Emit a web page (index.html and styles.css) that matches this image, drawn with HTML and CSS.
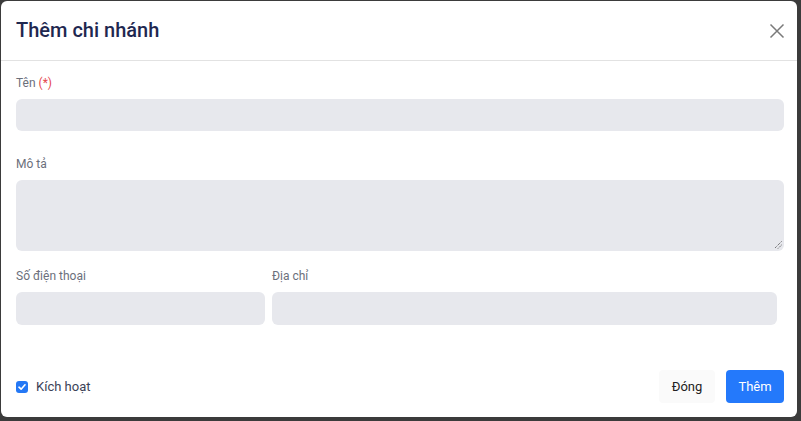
FILE: index.html
```html
<!DOCTYPE html>
<html lang="vi">
<head>
<meta charset="utf-8">
<title>Thêm chi nhánh</title>
<link rel="stylesheet" href="styles.css">
</head>
<body>
<div class="modal">
  <div class="modal-header">
    <h2 class="modal-title">Thêm chi nhánh</h2>
    <button class="close-btn" aria-label="Đóng">
      <svg width="16" height="16" viewBox="0 0 16 16"><path d="M1.5 1.5 L14.5 14.5 M14.5 1.5 L1.5 14.5" stroke="#7a7a7a" stroke-width="1.5" fill="none"/></svg>
    </button>
  </div>
  <div class="modal-body">
    <div class="field">
      <label class="label">Tên <span class="req">(*)</span></label>
      <div class="input"></div>
    </div>
    <div class="field">
      <label class="label">Mô tả</label>
      <div class="input textarea">
        <svg class="grip" width="8" height="8" viewBox="0 0 8 8"><path d="M7.5 0.5 L0.5 7.5 M7.5 4 L4 7.5" stroke="#444" stroke-width="1" stroke-dasharray="1 1" fill="none"/></svg>
      </div>
    </div>
    <div class="row">
      <div class="field">
        <label class="label">Số điện thoại</label>
        <div class="input"></div>
      </div>
      <div class="field">
        <label class="label">Địa chỉ</label>
        <div class="input"></div>
      </div>
    </div>
  </div>
  <div class="modal-footer">
    <label class="check">
      <span class="box"><svg width="8" height="8" viewBox="0 0 8 8"><path d="M1 4.2 L3.1 6.2 L7 1.8" stroke="#fff" stroke-width="1.6" fill="none" stroke-linecap="round" stroke-linejoin="round"/></svg></span>
      <span class="check-text">Kích hoạt</span>
    </label>
    <div class="actions">
      <button class="btn btn-light">Đóng</button>
      <button class="btn btn-primary">Thêm</button>
    </div>
  </div>
</div>
</body>
</html>
```
FILE: styles.css
```css
* { box-sizing: border-box; }
html, body { margin: 0; padding: 0; }
body {
  background: #3b3b3b;
  font-family: Roboto, "Liberation Sans", sans-serif;
  width: 801px;
  height: 421px;
  overflow: hidden;
  padding: 1px 0 0 1px;
}
.modal {
  width: 796px;
  height: 416px;
  background: #fff;
  border-radius: 6px;
  display: flex;
  flex-direction: column;
}
.modal-header {
  height: 60px;
  border-bottom: 1px solid #e2e2e2;
  display: flex;
  align-items: center;
  justify-content: space-between;
  padding: 0 12px 0 15px;
}
.modal-title {
  margin: 0;
  font-size: 20px;
  font-weight: 500;
  color: #1f2850;
  padding-bottom: 1px;
}
.close-btn {
  background: none;
  border: 0;
  padding: 0;
  width: 16px;
  height: 16px;
  display: flex;
}
.modal-body {
  padding: 13px 13px 0 15px;
}
.field { display: flex; flex-direction: column; }
.label {
  font-size: 12px;
  color: #6b6f7b;
  line-height: 18px;
  margin-bottom: 7px;
}
.req { color: #e5484d; }
.input {
  height: 32px;
  background: #e7e8ed;
  border-radius: 6px;
  margin-bottom: 24px;
  position: relative;
}
.textarea {
  height: 71px;
  margin-bottom: 16px;
}
.grip { position: absolute; right: 2px; bottom: 2px; }
.row {
  display: grid;
  grid-template-columns: 249px 505px;
  column-gap: 7px;
}
.row .input { height: 33px; margin-bottom: 0; }
.modal-footer {
  margin-top: auto;
  padding: 0 13px 14px 15px;
  display: flex;
  align-items: center;
  justify-content: space-between;
}
.check { display: flex; align-items: center; gap: 8px; }
.box {
  width: 12px;
  height: 12px;
  border-radius: 3px;
  background: #2478f5;
  display: flex;
  align-items: center;
  justify-content: center;
}
.check-text { font-size: 13px; color: #3b4257; }
.actions { display: flex; gap: 11px; }
.btn {
  height: 33px;
  border: 0;
  border-radius: 4px;
  font-family: Roboto, "Liberation Sans", sans-serif;
  font-size: 13px;
  padding: 0 12px;
}
.btn-light { background: #fafafa; color: #222; width: 56px; }
.btn-primary { background: #2479fb; color: #fff; width: 58px; }
```
